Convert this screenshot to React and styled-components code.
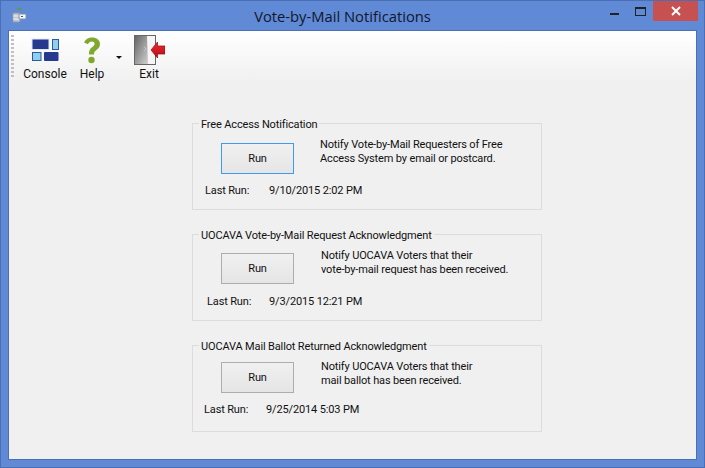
import React from "react"
import styled, { createGlobalStyle } from "styled-components"

const GlobalStyle = createGlobalStyle`
  html, body {
    margin: 0;
    padding: 0;
    background: #6289d3;
  }
  * {
    box-sizing: border-box;
  }
`

const Window = styled.div`
  width: 705px;
  height: 468px;
  display: flex;
  flex-direction: column;
  overflow: hidden;
  background: #6089d6;
  border: 1px solid #4a6fb5;
  font-family: Roboto, "Liberation Sans", Arial, sans-serif;
  font-size: 11px;
  letter-spacing: -0.14px;
  color: #111;
`

const TitleBar = styled.div`
  height: 29px;
  flex: none;
  display: flex;
  align-items: flex-start;
`

const AppIcon = styled.svg`
  width: 16px;
  height: 16px;
  margin: 6px 0 0 10px;
`

const Title = styled.div`
  flex: 1;
  text-align: center;
  font-family: "Open Sans", sans-serif;
  font-size: 14.75px;
  letter-spacing: 0;
  line-height: 30px;
  color: #10182c;
  padding-left: 57px;
`

const Controls = styled.div`
  display: flex;
  align-items: flex-start;
  margin-right: 6px;
`

const ControlButton = styled.div`
  width: ${(p) => p.$w}px;
  height: 20px;
  display: flex;
  align-items: center;
  justify-content: center;
  background: ${(p) => p.$bg || "transparent"};
`

const Body = styled.div`
  flex: 1;
  margin: 0 7px 7px;
  background: #f0f0f0;
  border: 1px solid #4a6fb5;
  display: flex;
  flex-direction: column;
`

const Toolbar = styled.div`
  height: 52px;
  flex: none;
  display: flex;
  padding-left: 2px;
  background: linear-gradient(#ffffff, #f0f0f0);
`

const Grip = styled.div`
  width: 3px;
  height: 42px;
  margin-top: 4px;
  background: repeating-linear-gradient(#c0c0c0 0 2px, transparent 2px 4px);
`

const ToolButton = styled.div`
  width: ${(p) => p.$w}px;
  margin-left: ${(p) => p.$gap || 0}px;
  display: flex;
  flex-direction: column;
  align-items: center;
  padding-top: 4px;
  position: relative;
`

const ToolIcon = styled.svg`
  width: 32px;
  height: 32px;
  display: block;
`

const ToolLabel = styled.span`
  line-height: 14px;
  font-size: 12px;
  letter-spacing: 0;
`

const Caret = styled.span`
  position: absolute;
  right: -12px;
  top: 25px;
  width: 0;
  height: 0;
  border: 3px solid transparent;
  border-top-color: #111;
`

const Groups = styled.div`
  display: flex;
  flex-direction: column;
  gap: 17px;
  padding: 33px 0 0 183px;
`

const Group = styled.fieldset`
  width: 350px;
  height: 94px;
  margin: 0;
  padding: 0;
  border: 1px solid #dcdcdc;
  display: block;
`

const Legend = styled.legend`
  margin-left: 6px;
  padding: 2px 2px 0;
  line-height: 13px;
`

const GroupRow = styled.div`
  display: flex;
  align-items: flex-start;
  padding: 7px 0 0 28px;
`

const RunButton = styled.div`
  width: 73px;
  height: 31px;
  flex: none;
  margin-top: ${(p) => p.$top}px;
  display: flex;
  align-items: center;
  justify-content: center;
  background: linear-gradient(#f0f0f0, #e5e5e5);
  border: 1px solid ${(p) => (p.$focus ? "#3f9bf0" : "#adadad")};
`

const Description = styled.div`
  margin-left: ${(p) => p.$left}px;
  line-height: 14px;
  white-space: nowrap;
`

const LastRun = styled.div`
  display: flex;
  padding-left: ${(p) => p.$left}px;
  margin-top: ${(p) => p.$top}px;
  line-height: 14px;
`

const LastRunLabel = styled.span`
  width: ${(p) => p.$w}px;
`

const groups = [
  {
    title: "Free Access Notification",
    lines: ["Notify Vote-by-Mail Requesters of Free", "Access System by email or postcard."],
    date: "9/10/2015 2:02 PM",
    buttonTop: 5,
    descLeft: 26,
    runLeft: 12,
    labelWidth: 64,
    runTop: 10,
    focus: true,
  },
  {
    title: "UOCAVA Vote-by-Mail Request Acknowledgment",
    lines: ["Notify UOCAVA Voters that their", "vote-by-mail request has been received."],
    date: "9/3/2015 12:21 PM",
    buttonTop: 4,
    descLeft: 27,
    runLeft: 14,
    labelWidth: 62,
    runTop: 11,
  },
  {
    title: "UOCAVA Mail Ballot Returned Acknowledgment",
    lines: ["Notify UOCAVA Voters that their", "mail ballot has been received."],
    date: "9/25/2014 5:03 PM",
    buttonTop: 2,
    descLeft: 27,
    runLeft: 11,
    labelWidth: 62,
    runTop: 10,
  },
]

const App = () => (
  <Window>
    <GlobalStyle />
    <TitleBar>
      <AppIcon viewBox="0 0 16 16">
        <path d="M2 6h7v9H2z" fill="#c4c9d0" stroke="#8d96a4" />
        <path d="M2 9h7M2 12h7" stroke="#eef0f3" />
        <path d="M8 7h7v5H8z" fill="#f4f7fc" stroke="#7e90ad" />
        <path d="M10 9h2v1h-2z" fill="#35569c" />
        <path d="M6 1c2-1 4 0 5 2-2 1-4 0-5-2z" fill="#5f9a4e" />
      </AppIcon>
      <Title>Vote-by-Mail Notifications</Title>
      <Controls>
        <ControlButton $w={26}>
          <svg width="9" height="9" viewBox="0 0 9 9">
            <rect width="9" height="2" y="6" fill="#222" />
          </svg>
        </ControlButton>
        <ControlButton $w={26}>
          <svg width="11" height="9" viewBox="0 0 11 9">
            <rect x="0.5" y="0.5" width="10" height="8" fill="none" stroke="#222" />
            <rect x="0" y="0" width="11" height="2" fill="#222" />
          </svg>
        </ControlButton>
        <ControlButton $w={45} $bg="#c75050">
          <svg width="10" height="10" viewBox="0 0 10 10">
            <path d="M1 1l8 8M9 1L1 9" stroke="#fff" strokeWidth="2" />
          </svg>
        </ControlButton>
      </Controls>
    </TitleBar>
    <Body>
      <Toolbar>
        <Grip />
        <ToolButton $w={50} $gap={6}>
          <ToolIcon viewBox="0 0 32 32">
            <rect x="3" y="4" width="17" height="10.500" fill="#253a8f" stroke="#dfe8f7" />
            <rect x="23.500" y="4.500" width="6" height="10" fill="#8fd0ee" stroke="#2c5aa0" />
            <rect x="3.500" y="17.500" width="8.500" height="8" fill="#8fd0ee" stroke="#2c5aa0" />
            <rect x="15" y="17" width="14.500" height="9" rx="1" fill="#253a8f" />
          </ToolIcon>
          <ToolLabel>Console</ToolLabel>
        </ToolButton>
        <ToolButton $w={36} $gap={4}>
          <ToolIcon viewBox="0 0 32 32">
            <path
              d="M8 7.500C9.500 4 12.500 2.500 16 2.500c4.500 0 8 2.500 8 6.500 0 3-1.800 4.700-3.600 6-1.700 1.200-2.400 2.300-2.400 4.500h-5c-.2-3.500.8-5.500 3-7.200 1.500-1.200 2.600-2 2.600-3.500 0-1.500-1.100-2.300-2.700-2.300-1.900 0-3.100 1-3.900 2.800z"
              fill="#7fa92c"
            />
            <circle cx="15.500" cy="25" r="3.200" fill="#7fa92c" />
          </ToolIcon>
          <ToolLabel>Help</ToolLabel>
          <Caret />
        </ToolButton>
        <ToolButton $w={36} $gap={21}>
          <ToolIcon viewBox="0 0 32 32">
            <defs>
              <linearGradient id="door" x1="0" x2="1" y1="0" y2="1">
                <stop offset="0" stopColor="#666666" />
                <stop offset="1" stopColor="#d0d0d0" />
              </linearGradient>
              <linearGradient id="arrow" x1="0" x2="0" y1="0" y2="1">
                <stop offset="0" stopColor="#ee2a30" />
                <stop offset="1" stopColor="#b80d16" />
              </linearGradient>
            </defs>
            <rect x="1.500" y="0.500" width="21" height="29" fill="#f6f6f6" stroke="#666" />
            <path d="M2 1h12l1 28H2z" fill="url(#door)" />
            <path d="M11 12l2 2-2 2" fill="none" stroke="#c4c4c4" />
            <path d="M18 15l6.500-8v4H32v8h-7.500v4z" fill="url(#arrow)" stroke="#8c0c14" strokeWidth="0.700" />
          </ToolIcon>
          <ToolLabel>Exit</ToolLabel>
        </ToolButton>
      </Toolbar>
      <Groups>
        {groups.map((g) => (
          <Group key={g.title}>
            <Legend>{g.title}</Legend>
            <GroupRow>
              <RunButton $focus={g.focus} $top={g.buttonTop}>
                Run
              </RunButton>
              <Description $left={g.descLeft}>
                {g.lines.map((line) => (
                  <div key={line}>{line}</div>
                ))}
              </Description>
            </GroupRow>
            <LastRun $left={g.runLeft} $top={g.runTop}>
              <LastRunLabel $w={g.labelWidth}>Last Run:</LastRunLabel>
              <span>{g.date}</span>
            </LastRun>
          </Group>
        ))}
      </Groups>
    </Body>
  </Window>
)

export default App
